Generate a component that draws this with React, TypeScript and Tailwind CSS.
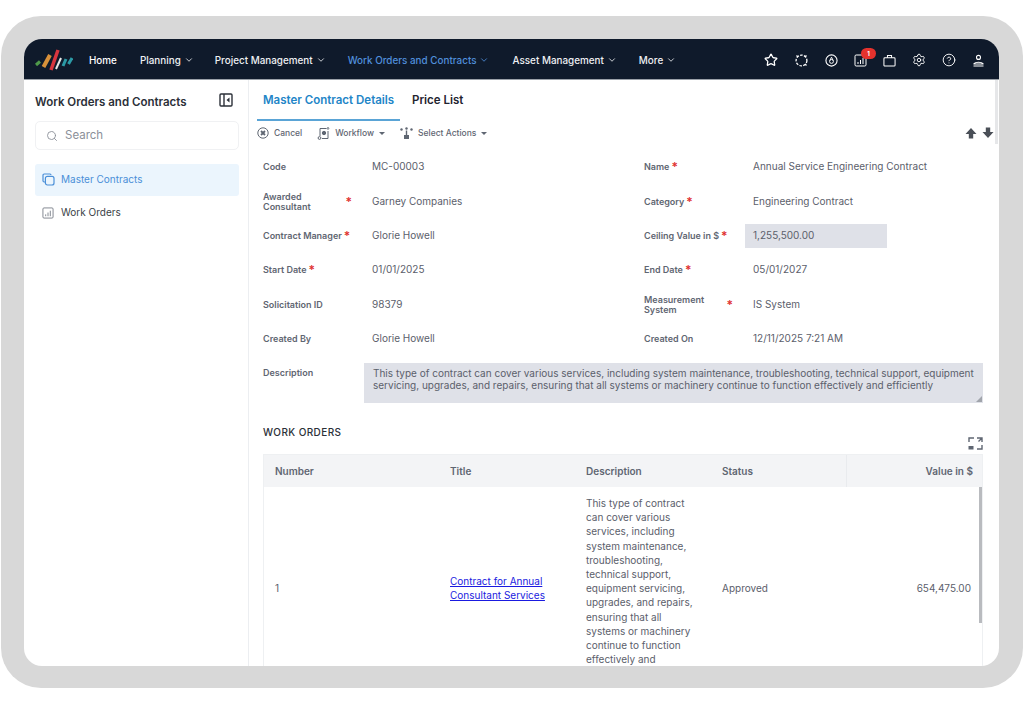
import { ReactNode } from "react";
import { ChevronDown, CircleHelp, Search, Settings, Star } from "lucide-react";

const navItems = [
  { label: "Planning", spacing: "ml-[23px]" },
  { label: "Project Management", spacing: "ml-[21px]" },
  { label: "Work Orders and Contracts", spacing: "ml-[22px]", active: true },
  { label: "Asset Management", spacing: "ml-[23px]" },
  { label: "More", spacing: "ml-[22px]" },
];

function Logo() {
  return (
    <svg width="38" height="22" viewBox="0 0 38 22" fill="none">
      <path d="M1 16 L5 12.5" stroke="#4f9a4a" strokeWidth="3" />
      <path d="M8.5 18 L15 6" stroke="#d9913a" strokeWidth="4" />
      <path d="M16 21 L23 1" stroke="#d8353f" strokeWidth="3.5" />
      <path d="M21 20 L26 9" stroke="#e8e8e8" strokeWidth="2" />
      <path d="M28 17 L31 10" stroke="#2c9aa6" strokeWidth="3" />
      <path d="M33.5 15 L37 9" stroke="#2c9aa6" strokeWidth="3" />
    </svg>
  );
}

function DashedCircleIcon() {
  return (
    <svg width="15" height="15" viewBox="0 0 15 15" fill="none" stroke="currentColor" strokeWidth="1.3">
      <circle cx="7.5" cy="7.5" r="5.4" strokeDasharray="2.6 1.3" />
      <path d="M2.5 2.5 L4 4 M12.5 12.5 L11 11 M12.5 2.5 L11 4" />
    </svg>
  );
}

function BadgeCircleIcon() {
  return (
    <svg width="13" height="13" viewBox="0 0 14 14" fill="none" stroke="currentColor">
      <circle cx="7" cy="7" r="6" strokeWidth="1.2" />
      <circle cx="7" cy="8" r="2.1" strokeWidth="1" />
      <path d="M7 3.4 L5.2 7 M7 3.4 L8.8 7" strokeWidth="1" />
    </svg>
  );
}

function ChartBoxIcon({ size = 13 }: { size?: number }) {
  return (
    <svg width={size} height={size} viewBox="0 0 13 13" fill="none" stroke="currentColor" strokeWidth="1">
      <rect x="1" y="1" width="11" height="11" rx="1.2" />
      <path d="M4 10 V8 M6.5 10 V6 M9 10 V4" />
    </svg>
  );
}

function CaseIcon() {
  return (
    <svg width="13" height="13" viewBox="0 0 14 14" fill="none" stroke="currentColor" strokeWidth="1.1">
      <rect x="1" y="4" width="12" height="9" rx="1" />
      <path d="M4.8 4 V1.6 H9.2 V4" />
    </svg>
  );
}

function PersonIcon() {
  return (
    <svg width="13" height="13" viewBox="0 0 13 13" fill="none" stroke="currentColor" strokeWidth="1.1">
      <circle cx="6.5" cy="3.4" r="2" />
      <path d="M2 9.6 C3.5 7.8 9.5 7.8 11 9.6 V10 H2 Z" />
      <path d="M1.5 12 H11.5" />
    </svg>
  );
}

function PanelIcon() {
  return (
    <svg width="14" height="14" viewBox="0 0 14 14" fill="none" stroke="currentColor" strokeWidth="1.4">
      <rect x="1" y="1" width="12" height="12" rx="1" />
      <path d="M5 1 V13" />
      <path d="M10.5 4.5 L7.5 7 L10.5 9.5 Z" fill="currentColor" stroke="none" />
    </svg>
  );
}

function StackIcon() {
  return (
    <svg width="13" height="13" viewBox="0 0 13 13" fill="none" stroke="currentColor" strokeWidth="1.2">
      <path d="M3 9 H2.2 A1.2 1.2 0 0 1 1 7.8 V2.2 A1.2 1.2 0 0 1 2.2 1 H8 A1.2 1.2 0 0 1 9 2" />
      <rect x="3.4" y="3.4" width="8.6" height="8.6" rx="2" />
    </svg>
  );
}

function CancelIcon() {
  return (
    <svg width="12" height="12" viewBox="0 0 12 12" fill="none" stroke="currentColor">
      <circle cx="6" cy="6" r="5.2" strokeWidth="1" />
      <path d="M4 4 L8 8 M8 4 L4 8" strokeWidth="1.8" />
    </svg>
  );
}

function WorkflowDocIcon() {
  return (
    <svg width="13" height="13" viewBox="0 0 13 13" fill="none" stroke="currentColor" strokeWidth="1">
      <path d="M3 9 V1.5 H9.5" />
      <path d="M11 4 V11.5 H5" />
      <circle cx="7" cy="6" r="1.7" fill="currentColor" />
      <circle cx="2.5" cy="11" r="1.4" />
      <path d="M11 0.5 V2.8 M10 1.5 L11 0.5 L12 1.5" />
    </svg>
  );
}

function ActionsIcon() {
  return (
    <svg width="13" height="13" viewBox="0 0 13 13" fill="currentColor">
      <circle cx="1.5" cy="2.5" r="1.2" />
      <circle cx="6.5" cy="1.5" r="1.2" />
      <circle cx="11.5" cy="2.5" r="1.2" />
      <path d="M5.8 3.5 H7.2 V8 H9 V12 H4 V8 H5.8 Z" />
    </svg>
  );
}

function SolidArrow({ down }: { down?: boolean }) {
  return (
    <svg width="12" height="12" viewBox="0 0 12 12" fill="currentColor" className={down ? "rotate-180" : ""}>
      <path d="M6 1 L11.5 7 H8.2 V11.5 H3.8 V7 H0.5 Z" />
    </svg>
  );
}

function ExpandIcon() {
  return (
    <svg width="15" height="13" viewBox="0 0 15 13" fill="none" stroke="currentColor" strokeWidth="1.4">
      <path d="M1 5 V1 H6" />
      <path d="M9 1 H14 V5 M14 1 L10.5 4.5" />
      <path d="M14 8 V12 H9" />
      <rect x="0.5" y="9" width="5" height="3.5" fill="currentColor" stroke="none" />
    </svg>
  );
}

function Field({
  label,
  value,
  required,
  split,
}: {
  label: ReactNode;
  value: ReactNode;
  required?: boolean;
  split?: boolean;
}) {
  return (
    <div className="flex items-center">
      <div className={`flex w-[109px] shrink-0 items-center text-[9px] font-semibold leading-[10px] text-[#5f6672] ${split ? "justify-between pr-[20px]" : ""}`}>
        <span>{label}</span>
        {required && <span className={`text-[12px] text-[#e0312f] ${split ? "" : "ml-[2px]"}`}>*</span>}
      </div>
      <div className="pb-[1px] text-[10px] text-[#5b606b]">{value}</div>
    </div>
  );
}

function Th({ className, children }: { className: string; children: ReactNode }) {
  return (
    <div className={`flex items-center pt-[1px] text-[10px] font-semibold text-[#5f6672] ${className}`}>{children}</div>
  );
}

export default function App() {
  return (
    <div className="h-[705px] w-[1024px] overflow-hidden bg-white pl-[1px] pt-4 font-['Inter',sans-serif]">
      <div className="h-[672px] w-[1022px] rounded-[40px] bg-[#d8d8d8] pl-[23px] pt-[23px]">
        <div className="flex h-[627px] w-[975px] flex-col overflow-hidden rounded-[18px] bg-white">
          <header className="flex h-[41px] shrink-0 items-center border-b border-[#9aa0a8] bg-[#0f1a2b] pl-[11px] pr-[14px] pt-[2px] text-white">
            <Logo />
            <span className="ml-[16px] text-[9.9px] font-medium">Home</span>
            {navItems.map((item) => (
              <div
                key={item.label}
                className={`flex items-center gap-[3px] text-[9.9px] font-medium ${item.spacing} ${item.active ? "text-[#4f8fdc]" : "text-[#eef0f3]"}`}
              >
                {item.label}
                <ChevronDown size={10} strokeWidth={2} />
              </div>
            ))}
            <div className="ml-auto flex items-center gap-[16px]">
              <Star size={14} strokeWidth={2.2} />
              <DashedCircleIcon />
              <BadgeCircleIcon />
              <div className="relative">
                <ChartBoxIcon />
                <span className="absolute -top-[6px] left-[7px] flex h-[11px] w-[15px] items-center justify-center rounded-full bg-[#e5322d] text-[6px] font-bold text-white">1</span>
              </div>
              <CaseIcon />
              <Settings size={14} strokeWidth={1.6} />
              <CircleHelp size={14} strokeWidth={1.6} />
              <PersonIcon />
            </div>
          </header>

          <div className="flex min-h-0 flex-1">
            <aside className="w-[225px] shrink-0 border-r border-[#eceef1] pl-[11px] pr-[9px] pt-[15px]">
              <div className="flex h-[16px] items-center justify-between pr-[6px]">
                <h2 className="text-[11.5px] font-semibold text-[#2b3038]">Work Orders and Contracts</h2>
                <span className="-mt-[6px] text-[#2b3038]"><PanelIcon /></span>
              </div>
              <div className="mt-[10px] flex h-[29px] items-center gap-[7px] rounded-[5px] border border-[#f0f1f3] pl-[10px] text-[11.5px] text-[#8b9099]">
                <Search size={12} strokeWidth={1.8} />
                Search
              </div>
              <div className="mt-[14px] flex h-[32px] items-center gap-[6px] rounded-[3px] bg-[#ebf5fd] pb-[1px] pl-[7px] text-[10px] text-[#4a8fd8]">
                <StackIcon />
                Master Contracts
              </div>
              <div className="mt-[1px] flex h-[32px] items-center gap-[7px] pb-[1px] pl-[7px] text-[10px] text-[#3a3f47]">
                <span className="text-[#7b808a]"><ChartBoxIcon size={12} /></span>
                Work Orders
              </div>
            </aside>

            <main className="relative min-w-0 flex-1 overflow-hidden pl-[14px]">
              <div className="flex h-[41px] items-start">
                <div className="-ml-[6px] h-[41px] w-[143px] border-b-2 border-[#5aa4d6] pl-[6px] pt-[12px] text-[11.5px] font-semibold text-[#2285c7]">
                  Master Contract Details
                </div>
                <div className="ml-[12px] pt-[12px] text-[11.5px] font-semibold text-[#1f2430]">Price List</div>
              </div>

              <div className="flex h-[24px] items-center pr-[5px] text-[8.5px] font-medium text-[#5f6672]">
                <span className="-ml-[6px]"><CancelIcon /></span>
                <span className="ml-[5px]">Cancel</span>
                <span className="ml-[15px]"><WorkflowDocIcon /></span>
                <span className="ml-[5px]">Workflow</span>
                <span className="ml-[5px] border-x-[3px] border-t-[3px] border-x-transparent border-t-[#5f6672]" />
                <span className="ml-[15px]"><ActionsIcon /></span>
                <span className="ml-[5px]">Select Actions</span>
                <span className="ml-[5px] border-x-[3px] border-t-[3px] border-x-transparent border-t-[#5f6672]" />
                <div className="ml-auto flex items-center gap-[5px] text-[#4a4f57]">
                  <SolidArrow />
                  <SolidArrow down />
                </div>
              </div>

              <div className="mt-[5px] grid w-[720px] auto-rows-[34.4px] grid-cols-[381px_1fr]">
                <Field label="Code" value="MC-00003" />
                <Field label="Name" value="Annual Service Engineering Contract" required />
                <Field label={<>Awarded<br />Consultant</>} value="Garney Companies" required split />
                <Field label="Category" value="Engineering Contract" required />
                <Field label="Contract Manager" value="Glorie Howell" required />
                <Field
                  label="Ceiling Value in $"
                  required
                  value={<div className="-ml-[8px] mt-[1px] flex h-[24px] w-[142px] items-center bg-[#dfe1e8] pl-[8px]">1,255,500.00</div>}
                />
                <Field label="Start Date" value="01/01/2025" required />
                <Field label="End Date" value="05/01/2027" required />
                <Field label="Solicitation ID" value="98379" />
                <Field label={<>Measurement<br />System</>} value="IS System" required split />
                <Field label="Created By" value="Glorie Howell" />
                <Field label="Created On" value="12/11/2025 7:21 AM" />
              </div>

              <div className="mt-[7px] flex w-[720px]">
                <div className="w-[101px] shrink-0 pt-[3px] text-[9px] font-semibold text-[#5f6672]">Description</div>
                <div className="relative h-[40px] flex-1 bg-[#dfe1e8] px-[9px] pt-[4px] text-[10px] leading-[12px] text-[#5b606b]">
                  This type of contract can cover various services, including system maintenance, troubleshooting, technical support, equipment servicing, upgrades, and repairs, ensuring that all systems or machinery continue to function effectively and efficiently
                  <span className="absolute bottom-[1px] right-[1px] border-b-[6px] border-l-[6px] border-b-[#a0a4ab] border-l-transparent" />
                </div>
              </div>

              <div className="mt-[22px] flex w-[720px] items-start justify-between">
                <h3 className="text-[10px] font-medium tracking-[0.4px] text-[#2b3038]">WORK ORDERS</h3>
                <span className="mt-[12px] text-[#5f6672]"><ExpandIcon /></span>
              </div>

              <div className="mt-[4px] w-[720px] border-x border-t border-[#eef0f2]">
                <div className="flex h-[32px] bg-[#f3f4f6]">
                  <Th className="w-[173px] pl-[11px]">Number</Th>
                  <Th className="w-[136px] pl-[13px]">Title</Th>
                  <Th className="w-[136px] pl-[13px]">Description</Th>
                  <Th className="w-[137px] pl-[13px]">Status</Th>
                  <Th className="flex-1 justify-end border-l border-[#e9ebee] pr-[9px]">Value in $</Th>
                </div>
                <div className="relative flex h-[202px] items-center text-[10px] text-[#5b606b]">
                  <div className="w-[173px] pl-[11px]">1</div>
                  <div className="w-[136px] pl-[13px] pr-[18px] leading-[14px] text-[#1a1ae0] underline">
                    Contract for Annual Consultant Services
                  </div>
                  <div className="w-[136px] pl-[13px] pr-[14px] leading-[14.2px]">
                    This type of contract can cover various services, including system maintenance, troubleshooting, technical support, equipment servicing, upgrades, and repairs, ensuring that all systems or machinery continue to function effectively and efficiently
                  </div>
                  <div className="w-[137px] pl-[13px]">Approved</div>
                  <div className="flex-1 pr-[11px] text-right">654,475.00</div>
                  <span className="absolute right-0 top-0 h-[136px] w-[3px] bg-[#b9bbbf]" />
                </div>
              </div>

              <span className="absolute right-[1px] top-0 h-[64px] w-[3px] bg-[#e6e7e9]" />
            </main>
          </div>
        </div>
      </div>
    </div>
  );
}
